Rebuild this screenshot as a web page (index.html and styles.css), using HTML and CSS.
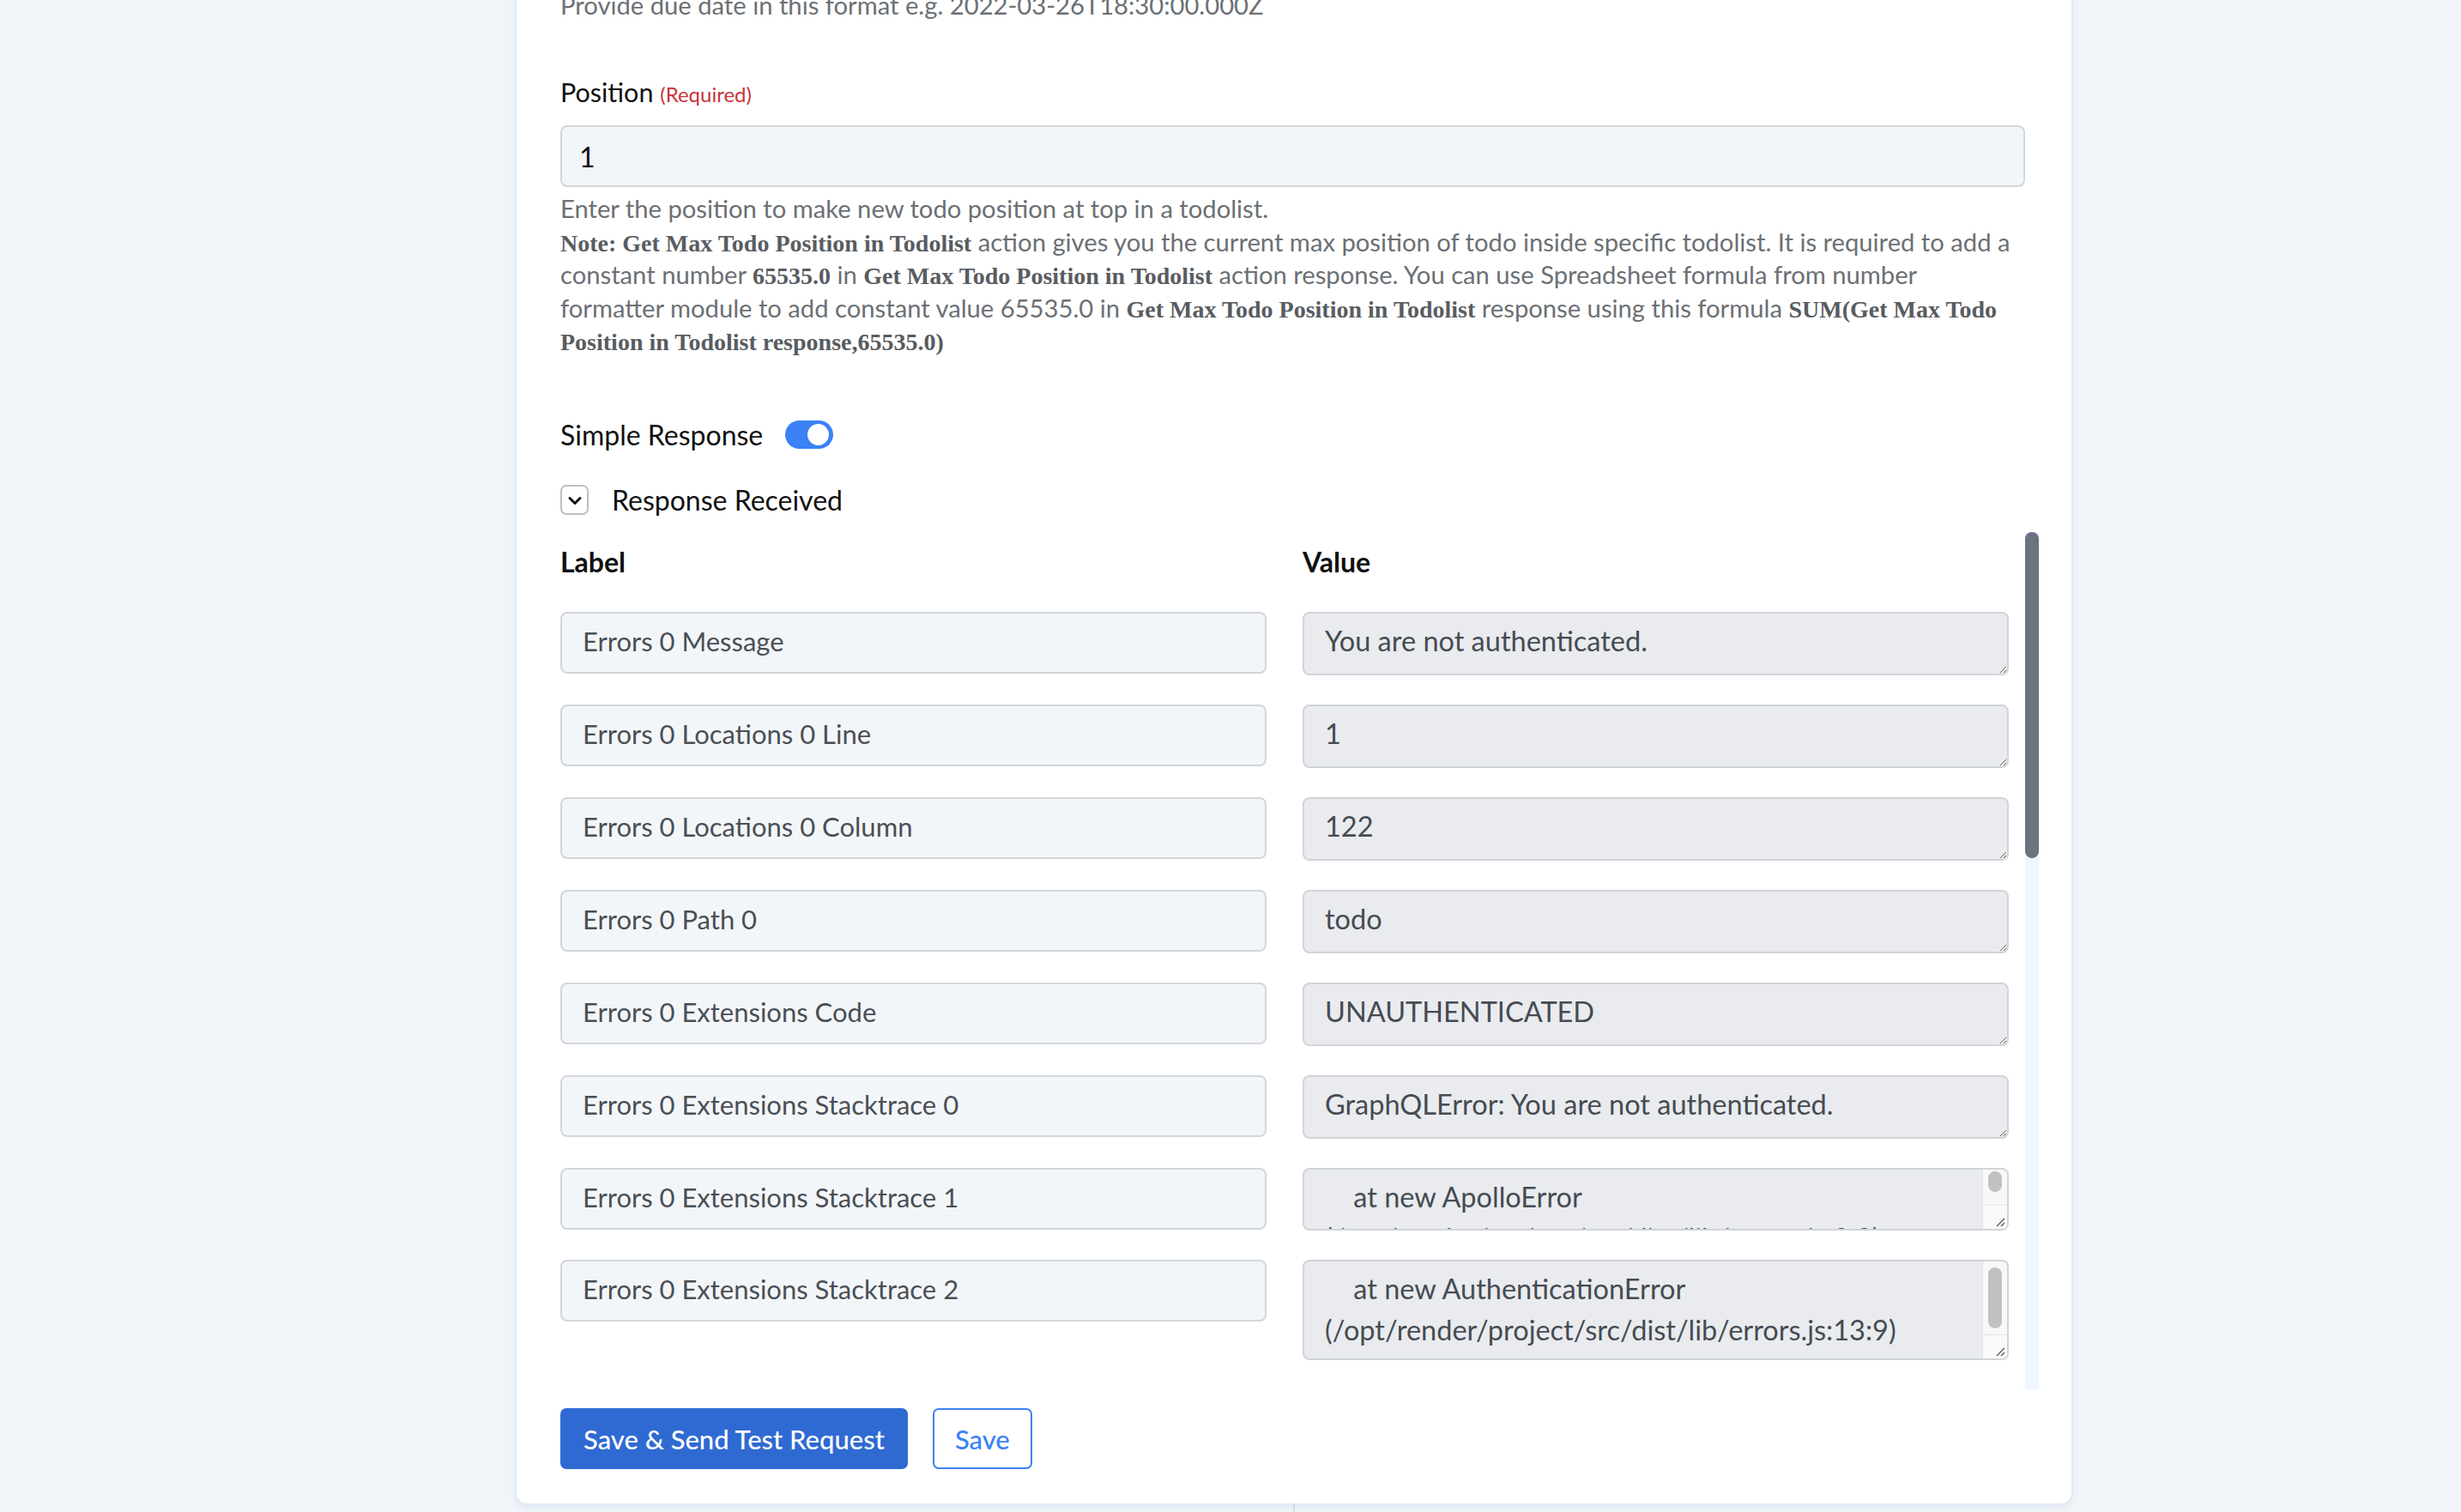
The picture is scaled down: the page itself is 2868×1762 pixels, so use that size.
FILE: index.html
```html
<!DOCTYPE html>
<html lang="en">
<head>
<meta charset="utf-8">
<title>Todo action settings</title>
<link rel="stylesheet" href="styles.css">
</head>
<body>
<div class="canvas">
  <section class="card">
    <p class="help">Provide due date in this format e.g. 2022-03-26T18:30:00.000Z</p>

    <div class="field">
      <label class="field-label" for="position">Position <span class="req">(Required)</span></label>
      <input id="position" class="text-input" type="text" value="1">
      <p class="help help-block">Enter the position to make new todo position at top in a todolist.<br><b>Note: Get Max Todo Position in Todolist</b> action gives you the current max position of todo inside specific todolist. It is required to add a constant number <b>65535.0</b> in <b>Get Max Todo Position in Todolist</b> action response. You can use Spreadsheet formula from number formatter module to add constant value 65535.0 in <b>Get Max Todo Position in Todolist</b> response using this formula <b>SUM(Get Max Todo Position in Todolist response,65535.0)</b></p>
    </div>

    <div class="toggle-row">
      <span class="toggle-label">Simple Response</span>
      <span class="switch" role="switch" aria-checked="true"><span class="knob"></span></span>
    </div>

    <div class="collapse-row">
      <span class="chev-box">
        <svg viewBox="0 0 22 22" width="22" height="22"><path d="M5 8.5 L11 14.5 L17 8.5" fill="none" stroke="#111" stroke-width="3" stroke-linecap="round" stroke-linejoin="round"/></svg>
      </span>
      <span class="collapse-label">Response Received</span>
    </div>

    <div class="resp-scroll">
      <div class="resp-viewport">
        <div class="resp-grid">
          <div class="col-head">Label</div>
          <div class="col-head">Value</div>

          <input class="lbl" type="text" value="Errors 0 Message" readonly>
          <textarea class="val" readonly>You are not authenticated.</textarea>

          <input class="lbl" type="text" value="Errors 0 Locations 0 Line" readonly>
          <textarea class="val" readonly>1</textarea>

          <input class="lbl" type="text" value="Errors 0 Locations 0 Column" readonly>
          <textarea class="val" readonly>122</textarea>

          <input class="lbl" type="text" value="Errors 0 Path 0" readonly>
          <textarea class="val" readonly>todo</textarea>

          <input class="lbl" type="text" value="Errors 0 Extensions Code" readonly>
          <textarea class="val" readonly>UNAUTHENTICATED</textarea>

          <input class="lbl" type="text" value="Errors 0 Extensions Stacktrace 0" readonly>
          <textarea class="val" readonly>GraphQLError: You are not authenticated.</textarea>

          <input class="lbl" type="text" value="Errors 0 Extensions Stacktrace 1" readonly>
          <div class="val-box val-box-short">
            <textarea class="val-inner" readonly>    at new ApolloError (/opt/render/project/src/dist/lib/errors.js:8:9)</textarea>
            <div class="tbar">
              <div class="tbar-track"><div class="tbar-thumb thumb-short"></div></div>
              <div class="tbar-corner"><svg viewBox="0 0 12 12" width="12" height="12"><path d="M11 2 L2 11 M11 7 L7 11" stroke="#555" stroke-width="1.3" fill="none"/></svg></div>
            </div>
          </div>

          <input class="lbl" type="text" value="Errors 0 Extensions Stacktrace 2" readonly>
          <div class="val-box val-box-tall">
            <textarea class="val-inner" readonly>    at new AuthenticationError (/opt/render/project/src/dist/lib/errors.js:13:9)</textarea>
            <div class="tbar">
              <div class="tbar-track"><div class="tbar-thumb thumb-tall"></div></div>
              <div class="tbar-corner"><svg viewBox="0 0 12 12" width="12" height="12"><path d="M11 2 L2 11 M11 7 L7 11" stroke="#555" stroke-width="1.3" fill="none"/></svg></div>
            </div>
          </div>

          <input class="lbl" type="text" value="Errors 0 Extensions Stacktrace 3" readonly>
          <textarea class="val val-tall" readonly>    at Object.todo (/opt/render/project/src/dist/resolvers/todo.js:21:19)</textarea>

          <input class="lbl" type="text" value="Errors 0 Extensions Stacktrace 4" readonly>
          <textarea class="val val-tall" readonly>    at field.resolve (/opt/render/project/src/node_modules/graphql-extensions/dist/index.js:134:26)</textarea>

          <input class="lbl" type="text" value="Errors 0 Extensions Stacktrace 5" readonly>
          <textarea class="val val-tall" readonly>    at resolveField (/opt/render/project/src/node_modules/graphql/execution/execute.js:464:18)</textarea>
        </div>
      </div>
      <div class="vbar"><div class="vbar-thumb"></div></div>
    </div>

    <div class="actions">
      <button class="btn btn-primary" type="button">Save &amp; Send Test Request</button>
      <button class="btn btn-outline" type="button">Save</button>
    </div>
  </section>
  <div class="connector"></div>
</div>
</body>
</html>
```

FILE: styles.css
```css
html, body {
  margin: 0;
  padding: 0;
}

body {
  background: #f1f5f9;
  font-family: "Lato", "Noto Sans", sans-serif;
  color: #111;
  overflow: hidden;
  height: 1762px;
}

.canvas {
  display: flex;
  flex-direction: column;
  align-items: flex-start;
  padding-left: 602px;
}

/* node card */
.card {
  box-sizing: border-box;
  width: 1812px;
  margin-top: -40px;
  padding: 27px 54px 40px 51px;
  background: #fff;
  border-radius: 12px;
  box-shadow: 0 0 0 2px #e1e9f7, 0 3px 10px rgba(120, 150, 200, 0.18);
}

.connector {
  width: 2px;
  height: 20px;
  margin-left: 905px;
  background: #d5dbe5;
}

.help {
  margin: 0;
  font-size: 29.2px;
  line-height: 38.4px;
  color: #6b7075;
}

.help b {
  font-family: "Liberation Serif", "Times New Roman", serif;
  font-size: 28px;
  line-height: 28px;
  font-weight: 700;
  color: #585c61;
}

.field {
  margin-top: 60px;
}

.field-label {
  display: block;
  font-size: 30.5px;
  line-height: 44px;
  color: #111;
}

.req {
  font-size: 24px;
  color: #c8333a;
}

.text-input {
  display: block;
  box-sizing: border-box;
  width: 100%;
  height: 72px;
  margin-top: 14px;
  padding: 0 20px;
  border: 2px solid #d2d6dc;
  border-radius: 8px;
  background: #f3f6f9;
  font-family: inherit;
  font-size: 32px;
  color: #111;
  outline: none;
}

.help-block {
  margin-top: 6px;
}

/* simple response switch */
.toggle-row {
  display: flex;
  align-items: center;
  gap: 26px;
  margin-top: 74px;
  height: 33px;
}

.toggle-label {
  font-size: 32px;
  line-height: 44px;
}

.switch {
  position: relative;
  width: 56px;
  height: 33px;
  border-radius: 17px;
  background: #3b82f6;
}

.knob {
  position: absolute;
  top: 4px;
  right: 5px;
  width: 25px;
  height: 25px;
  border-radius: 50%;
  background: #fff;
}

/* response received header */
.collapse-row {
  display: flex;
  align-items: center;
  gap: 27px;
  margin-top: 42px;
  height: 35px;
}

.chev-box {
  box-sizing: border-box;
  display: flex;
  align-items: center;
  justify-content: center;
  width: 33px;
  height: 35px;
  border: 2px solid #b9bec7;
  border-radius: 7px;
}

.collapse-label {
  font-size: 32px;
  line-height: 44px;
}

/* label/value table with its scroll rail */
.resp-scroll {
  display: flex;
  height: 999px;
  margin-top: 20px;
  margin-right: -16px;
}

.resp-viewport {
  flex: 1;
  min-width: 0;
  padding-top: 13px;
  overflow: hidden;
}

.vbar {
  width: 16px;
  background: #eff6ff;
}

.vbar-thumb {
  height: 380px;
  border-radius: 8px;
  background: #6b7280;
}

.resp-grid {
  display: grid;
  grid-template-columns: 823px 823px;
  column-gap: 42px;
  row-gap: 34px;
  align-items: start;
}

.col-head {
  font-size: 32px;
  font-weight: 700;
  line-height: 44px;
  margin-bottom: 2px;
}

.lbl {
  box-sizing: border-box;
  width: 100%;
  height: 72px;
  margin: 0;
  padding: 0 24px 4px;
  border: 2px solid #d2d6dc;
  border-radius: 8px;
  background: #f3f6f9;
  font-family: inherit;
  font-size: 31px;
  color: #4a4f56;
  outline: none;
}

.val {
  box-sizing: border-box;
  display: block;
  width: 100%;
  height: 74px;
  margin: 0;
  padding: 8px 24px 14px;
  border: 2px solid #d0d4da;
  border-radius: 8px;
  background: #e9ebef;
  font-family: inherit;
  font-size: 32.5px;
  line-height: 48px;
  color: #464b52;
  outline: none;
  resize: vertical;
  overflow: hidden;
}

.val-tall {
  height: 117px;
}

/* value boxes whose text overflows carry their own rail */
.val-box {
  box-sizing: border-box;
  display: flex;
  width: 100%;
  border: 2px solid #d0d4da;
  border-radius: 8px;
  background: #e9ebef;
  overflow: hidden;
}

.val-box-short {
  height: 73px;
}

.val-box-tall {
  height: 117px;
}

.val-inner {
  flex: 1;
  min-width: 0;
  margin: 0;
  padding: 8px 0 0 24px;
  border: none;
  background: transparent;
  font-family: inherit;
  font-size: 32.5px;
  line-height: 48px;
  color: #464b52;
  outline: none;
  resize: none;
  overflow: hidden;
}

.tbar {
  display: flex;
  flex-direction: column;
  width: 28px;
  background: #f8f8f8;
  border-left: 1px solid #e4e4e4;
}

.tbar-track {
  flex: 1;
  padding: 2px 6px 0;
}

.tbar-thumb {
  border-radius: 8px;
  background: #c1c1c1;
}

.thumb-short {
  height: 24px;
}

.thumb-tall {
  height: 71px;
  margin-top: 5px;
}

.tbar-corner {
  display: flex;
  align-items: flex-end;
  justify-content: flex-end;
  height: 28px;
  padding: 0 2px 2px 0;
  box-sizing: border-box;
  border-top: 1px solid #e4e4e4;
  background: #fafafa;
}

/* footer buttons */
.actions {
  display: flex;
  gap: 29px;
  margin-top: 22px;
}

.btn {
  box-sizing: border-box;
  height: 71px;
  border-radius: 7px;
  font-family: inherit;
  font-size: 31px;
  font-weight: 500;
  cursor: pointer;
}

.btn-primary {
  padding: 0 27px;
  border: none;
  background: #2f6ad2;
  color: #fff;
}

.btn-outline {
  padding: 0 24px;
  border: 2px solid #3b82f6;
  background: #fff;
  color: #3b82f6;
}
```
